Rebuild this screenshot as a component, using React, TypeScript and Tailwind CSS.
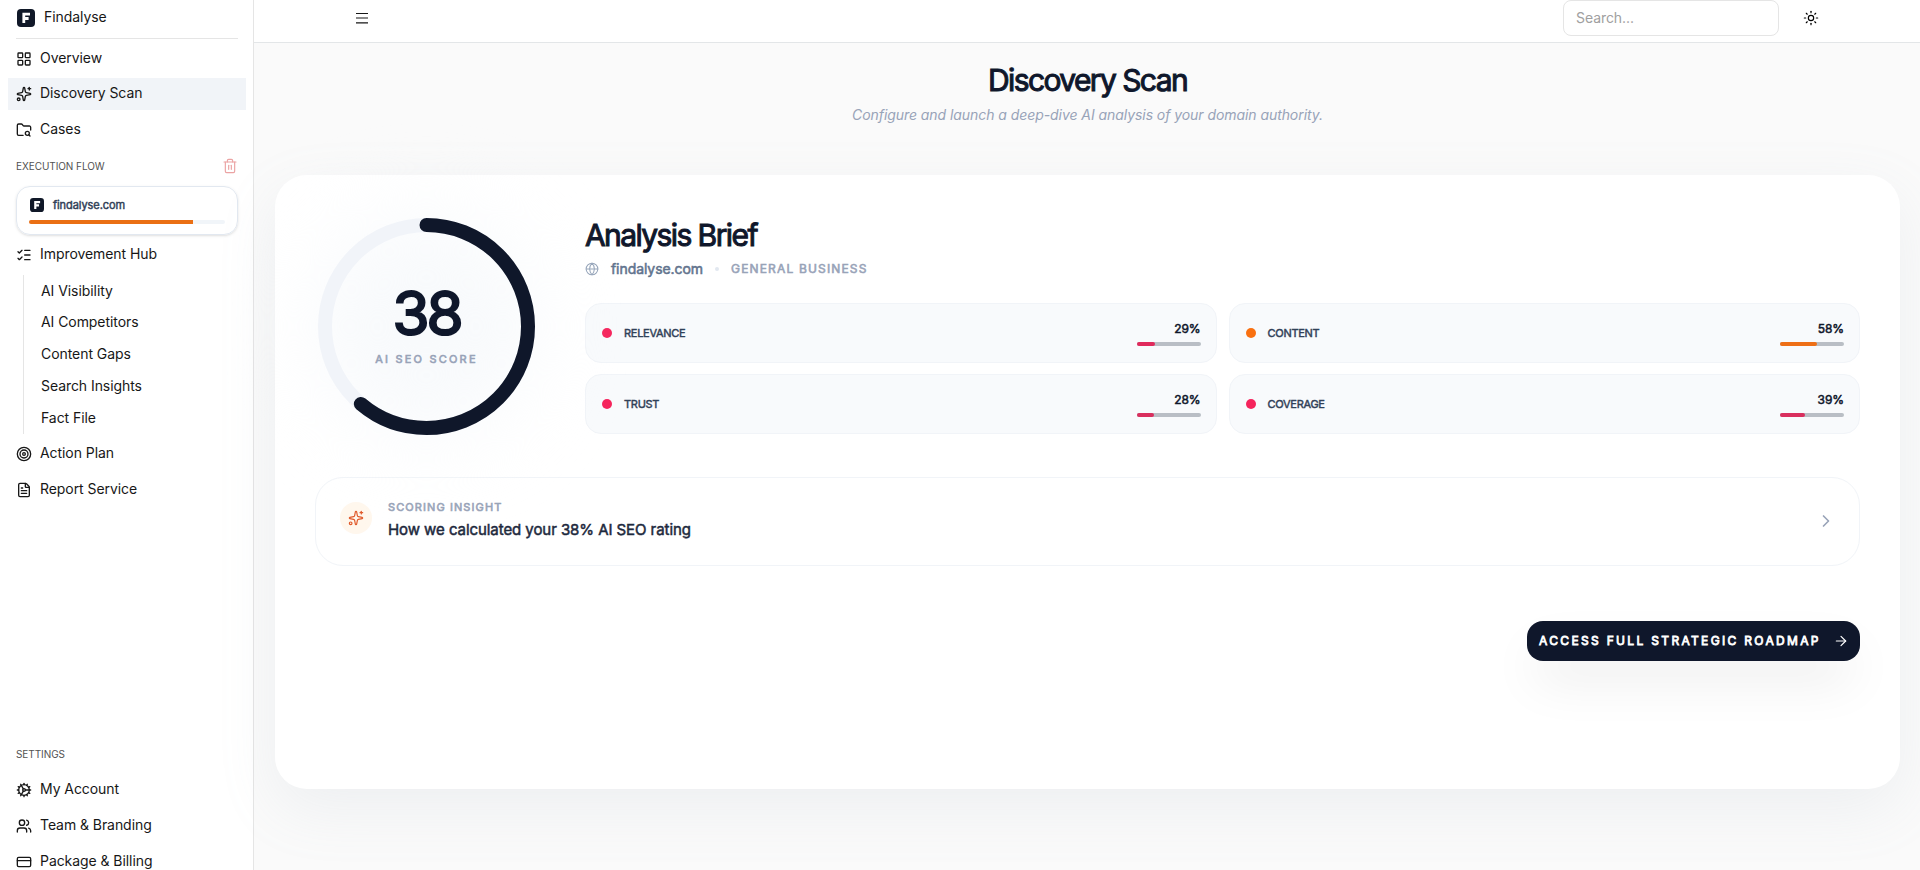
import type { ReactNode } from 'react';
import {
    ArrowRight,
    ChevronRight,
    Cog,
    CreditCard,
    FileText,
    FolderSearch,
    Globe,
    LayoutGrid,
    ListChecks,
    Sparkles,
    Sun,
    Target,
    Trash2,
    Users,
} from 'lucide-react';

interface NavItemProps {
    icon: ReactNode;
    label: string;
    active?: boolean;
}

interface Metric {
    label: string;
    value: number;
    dot: string;
    bar: string;
}

const SUB_ITEMS = ['AI Visibility', 'AI Competitors', 'Content Gaps', 'Search Insights', 'Fact File'];

const METRICS: Metric[] = [
    { label: 'Relevance', value: 29, dot: 'bg-[#f5245c]', bar: 'bg-[#e02a5c]' },
    { label: 'Content', value: 58, dot: 'bg-[#f97010]', bar: 'bg-[#ee6f16]' },
    { label: 'Trust', value: 28, dot: 'bg-[#f5245c]', bar: 'bg-[#d92f5e]' },
    { label: 'Coverage', value: 39, dot: 'bg-[#f5245c]', bar: 'bg-[#d92f5e]' },
];

const RING_RADIUS = 101.5;
const RING_LENGTH = 2 * Math.PI * RING_RADIUS;
const RING_PROGRESS = 0.611;

function Logo({ size }: { size: number }) {
    return (
        <svg width={size} height={size} viewBox="0 0 18 18" className="shrink-0">
            <rect width="18" height="18" rx="4" fill="#101828" />
            <path d="M6.8 14V5.2h6.2M6.8 9.5h4.8" fill="none" stroke="#fff" strokeWidth="2.8" />
        </svg>
    );
}

function MenuIcon() {
    return (
        <svg width="16" height="16" viewBox="0 0 16 16" fill="none" stroke="#171717" strokeWidth="1.2">
            <path d="M2 3.5h12M2 8h12M2 12.9h12" />
        </svg>
    );
}

function NavItem({ icon, label, active }: NavItemProps) {
    return (
        <a className={`flex h-8 shrink-0 items-center gap-2 px-2 text-sm text-neutral-900 ${active ? 'bg-[#f1f4f8]' : ''}`}>
            {icon}
            <span className="-mt-0.5">{label}</span>
        </a>
    );
}

function Sidebar() {
    return (
        <aside className="flex w-[254px] shrink-0 flex-col border-r border-neutral-200 bg-white pr-[7px] pl-2 *:shrink-0">
            <div className="mx-2 flex h-[39px] items-center gap-[9px] border-b border-neutral-200 pb-[3px] pl-px text-sm text-neutral-900">
                <Logo size={18} />
                <span className="-mt-px">Findalyse</span>
            </div>

            <nav className="mt-1 flex flex-col">
                <NavItem icon={<LayoutGrid size={16} />} label="Overview" />
                <div className="mt-[3px] mb-1">
                    <NavItem icon={<Sparkles size={16} />} label="Discovery Scan" active />
                </div>
                <NavItem icon={<FolderSearch size={16} />} label="Cases" />
            </nav>

            <div className="mt-2 flex h-6 items-center justify-between px-2">
                <span className="text-[10px] text-neutral-600 uppercase">Execution Flow</span>
                <Trash2 size={16} strokeWidth={1.75} className="text-[#eba3a3]" />
            </div>

            <div className="mx-2 mt-2 h-[49px] rounded-[14px] border border-slate-200 px-3 pt-[11px] shadow-sm">
                <div className="flex items-center gap-[9px] pl-px">
                    <Logo size={14} />
                    <span className="-mt-px text-[11px] leading-[14px] text-slate-700 [-webkit-text-stroke:0.45px]">findalyse.com</span>
                </div>
                <div className="mt-2 h-1 rounded-full bg-slate-100">
                    <div className="h-full w-[83.5%] rounded-l-full bg-[#ea6f14]" />
                </div>
            </div>

            <nav className="mt-1 flex flex-col gap-1">
                <NavItem icon={<ListChecks size={16} />} label="Improvement Hub" />
                <div className="ml-[15px] flex h-[159px] flex-col justify-between border-l border-neutral-200 pb-px pl-[17px]">
                    {SUB_ITEMS.map((item) => (
                        <a key={item} className="flex h-[31px] items-center text-sm text-neutral-900">{item}</a>
                    ))}
                </div>
                <NavItem icon={<Target size={16} />} label="Action Plan" />
                <NavItem icon={<FileText size={16} />} label="Report Service" />
            </nav>

            <div className="mt-[236px] flex h-6 items-center px-2 text-[10px] text-neutral-600 uppercase">Settings</div>
            <nav className="mt-2 flex flex-col gap-1">
                <NavItem icon={<Cog size={16} />} label="My Account" />
                <NavItem icon={<Users size={16} />} label="Team & Branding" />
                <NavItem icon={<CreditCard size={16} />} label="Package & Billing" />
            </nav>
        </aside>
    );
}

function ScoreRing() {
    return (
        <div className="relative flex size-[223px] shrink-0 flex-col items-center justify-center">
            <div className="absolute inset-0 rounded-full bg-slate-50 blur-2xl" />
            <svg width="223" height="223" viewBox="0 0 223 223" className="absolute inset-0 -rotate-90">
                <circle cx="111.5" cy="111.5" r={RING_RADIUS} fill="none" stroke="#f1f4f9" strokeWidth="14" />
                <circle
                    cx="111.5"
                    cy="111.5"
                    r={RING_RADIUS}
                    fill="none"
                    stroke="#0f172a"
                    strokeWidth="14"
                    strokeLinecap="round"
                    strokeDasharray={`${RING_LENGTH * RING_PROGRESS} ${RING_LENGTH}`}
                />
            </svg>
            <span className="relative text-[60px] leading-[60px] tracking-[-0.05em] text-slate-900 [-webkit-text-stroke:2.2px]">38</span>
            <span className="relative mt-2 mb-[3px] text-[11px] leading-4 tracking-[0.2em] text-[#98a3b8] uppercase [-webkit-text-stroke:0.6px]">AI SEO Score</span>
        </div>
    );
}

function MetricTile({ metric }: { metric: Metric }) {
    return (
        <div className="flex h-[60px] items-center justify-between rounded-2xl border border-[#f1f4f8] bg-slate-50 pr-[15px] pl-4">
            <div className="flex items-center gap-3">
                <span className={`size-2.5 rounded-full ${metric.dot}`} />
                <span className="text-[11px] tracking-[-0.025em] text-slate-700 uppercase [-webkit-text-stroke:0.45px]">{metric.label}</span>
            </div>
            <div className="flex flex-col items-end gap-[5px] pt-px">
                <span className="text-xs text-slate-900 [-webkit-text-stroke:0.5px]">{metric.value}%</span>
                <div className="h-1 w-16 overflow-hidden rounded-full bg-[#b9bec5]">
                    <div className={`h-full rounded-r-full ${metric.bar}`} style={{ width: `${metric.value}%` }} />
                </div>
            </div>
        </div>
    );
}

export default function App() {
    return (
        <div className="flex h-[870px] w-full overflow-hidden bg-[#fafafa] font-[Inter,sans-serif] tracking-[-0.004em]">
            <Sidebar />

            <div className="flex min-w-0 flex-1 flex-col">
                <header className="flex h-[43px] shrink-0 items-start border-b border-[#e3e6e8] bg-white pr-[101px] pl-[100px]">
                    <div className="flex h-9 flex-1 items-center">
                        <MenuIcon />
                    </div>
                    <div className="flex h-9 w-[216px] items-center rounded-lg border border-neutral-200 px-3 text-sm text-[#a0a0a0]">Search...</div>
                    <Sun size={16} strokeWidth={1.75} className="mt-2.5 ml-6" />
                </header>

                <main className="flex flex-1 flex-col pr-5 pl-[21px]">
                    <div className="flex flex-col items-center pt-[19px]">
                        <h1 className="text-[30px] leading-9 tracking-[-0.053em] text-slate-900 [-webkit-text-stroke:1px]">Discovery Scan</h1>
                        <p className="mt-[7px] text-sm leading-5 text-[#98a3b8] italic">
                            Configure and launch a deep-dive AI analysis of your domain authority.
                        </p>
                    </div>

                    <section className="mt-[50px] h-[614px] rounded-[32px] bg-white px-10 pt-10 shadow-[0_20px_60px_rgba(148,163,184,0.12)]">
                        <div className="flex gap-[47px]">
                            <ScoreRing />
                            <div className="min-w-0 flex-1">
                                <h2 className="mt-0.5 text-[30px] leading-9 tracking-[-0.053em] text-slate-900 [-webkit-text-stroke:1px]">Analysis Brief</h2>
                                <div className="mt-1.5 flex h-5 items-center text-sm">
                                    <Globe size={14} strokeWidth={1.75} className="text-[#94a3b8]" />
                                    <span className="-mt-px ml-3 text-slate-500 [-webkit-text-stroke:0.55px]">findalyse.com</span>
                                    <span className="mx-3 size-1 rounded-full bg-slate-200" />
                                    <span className="text-xs tracking-[0.097em] text-[#98a3b8] uppercase [-webkit-text-stroke:0.6px]">General Business</span>
                                </div>
                                <div className="mt-6 grid grid-cols-2 gap-x-3 gap-y-[11px]">
                                    {METRICS.map((metric) => (
                                        <MetricTile key={metric.label} metric={metric} />
                                    ))}
                                </div>
                            </div>
                        </div>

                        <div className="mt-[39px] flex h-[89px] items-center rounded-[28px] border border-[#f1f4f8] pr-[23px] pl-6">
                            <div className="-mt-2 flex size-8 items-center justify-center rounded-full bg-orange-50">
                                <Sparkles size={16} strokeWidth={1.75} className="text-[#e0592a]" />
                            </div>
                            <div className="-mt-0.5 ml-4 flex-1">
                                <div className="text-[11px] leading-4 tracking-[0.1em] text-[#98a3b8] uppercase [-webkit-text-stroke:0.6px]">Scoring Insight</div>
                                <div className="mt-[3px] text-[15px] leading-6 text-slate-800 [-webkit-text-stroke:0.5px]">How we calculated your 38% AI SEO rating</div>
                            </div>
                            <ChevronRight size={20} className="-mt-0.5 text-[#98a3b8]" />
                        </div>

                        <div className="mt-[55px] flex justify-end">
                            <button className="flex h-10 w-[333px] items-center justify-between rounded-2xl bg-slate-900 pr-[11px] pl-3 text-xs tracking-[0.194em] whitespace-nowrap text-white uppercase shadow-[0_25px_50px_-8px_rgba(0,0,0,0.1)] [-webkit-text-stroke:0.8px]">
                                Access Full Strategic Roadmap
                                <ArrowRight size={16} strokeWidth={1.75} />
                            </button>
                        </div>
                    </section>
                </main>
            </div>
        </div>
    );
}
